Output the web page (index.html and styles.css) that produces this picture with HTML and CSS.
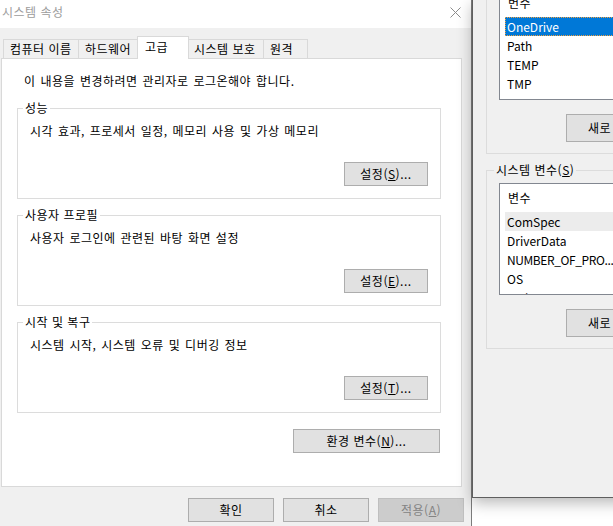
FILE: index.html
```html
<!DOCTYPE html>
<html lang="ko">
<head>
<meta charset="utf-8">
<title>시스템 속성</title>
<link rel="stylesheet" href="styles.css">
</head>
<body>
<div class="win-sys">
  <div class="titlebar">
    <span class="title">시스템 속성</span>
    <svg class="close" width="11" height="11" viewBox="0 0 11 11"><path d="M0.5 0.5L10.5 10.5M10.5 0.5L0.5 10.5" stroke="#8c8c8c" stroke-width="1" fill="none"/></svg>
  </div>
  <div class="sys-body">
    <div class="tabs">
      <div class="tab t1">컴퓨터 이름</div>
      <div class="tab t2">하드웨어</div>
      <div class="tab sel">고급</div>
      <div class="tab t4">시스템 보호</div>
      <div class="tab t5">원격</div>
    </div>
    <div class="panel">
      <p class="note">이 내용을 변경하려면 관리자로 로그온해야 합니다.</p>
      <fieldset class="group">
        <legend>성능</legend>
        <p class="desc">시각 효과, 프로세서 일정, 메모리 사용 및 가상 메모리</p>
        <div class="btn-row"><button class="btn">설정(<u>S</u>)...</button></div>
      </fieldset>
      <fieldset class="group">
        <legend>사용자 프로필</legend>
        <p class="desc">사용자 로그인에 관련된 바탕 화면 설정</p>
        <div class="btn-row"><button class="btn">설정(<u>E</u>)...</button></div>
      </fieldset>
      <fieldset class="group">
        <legend>시작 및 복구</legend>
        <p class="desc">시스템 시작, 시스템 오류 및 디버깅 정보</p>
        <div class="btn-row"><button class="btn">설정(<u>T</u>)...</button></div>
      </fieldset>
      <div class="env-row"><button class="btn btn-wide">환경 변수(<u>N</u>)...</button></div>
    </div>
    <div class="actions">
      <button class="btn btn-act">확인</button>
      <button class="btn btn-act">취소</button>
      <button class="btn btn-act" disabled>적용(<u>A</u>)</button>
    </div>
  </div>
</div>

<div class="win-env">
  <fieldset class="egroup first">
    <legend>사용자 변수(U)</legend>
    <div class="list">
      <div class="lhead">변수</div>
      <div class="lrow selected">OneDrive</div>
      <div class="lrow">Path</div>
      <div class="lrow">TEMP</div>
      <div class="lrow">TMP</div>
    </div>
    <button class="btn btn-new">새로 만들기(<u>N</u>)...</button>
  </fieldset>
  <fieldset class="egroup">
    <legend>시스템 변수(<u>S</u>)</legend>
    <div class="list">
      <div class="lhead">변수</div>
      <div class="lrow hover">ComSpec</div>
      <div class="lrow">DriverData</div>
      <div class="lrow narrow">NUMBER_OF_PRO...</div>
      <div class="lrow">OS</div>
      <div class="lrow">Path</div>
    </div>
    <button class="btn btn-new">새로 만들기(<u>W</u>)...</button>
  </fieldset>
</div>
</body>
</html>
```

FILE: styles.css
```css
* { box-sizing: border-box; }
html, body { margin: 0; padding: 0; }
body {
  width: 613px;
  height: 526px;
  overflow: hidden;
  position: relative;
  background: #ffffff;
  font-family: "Noto Sans CJK KR", "Noto Sans", sans-serif;
  font-size: 12px;
  letter-spacing: 0.5px;
  color: #000;
}
u { text-decoration: underline; text-underline-offset: 1px; }

/* ---------- System properties window ---------- */
.win-sys {
  position: absolute;
  left: 0;
  top: 0;
  width: 472px;
  height: 540px;
  background: #f0f0f0;
  border-right: 1px solid #7c7c7c;
}
.titlebar {
  height: 28px;
  background: #fff;
  display: flex;
  align-items: flex-start;
  justify-content: space-between;
  padding: 4px 10px 0 2px;
}
.title { color: #9c9c9c; line-height: 16px; }
.close { margin-top: 3px; display: block; }

.sys-body { padding: 8px 7px 0 1px; }

.tabs {
  display: flex;
  align-items: flex-end;
  height: 22px;
  padding-left: 2px;
}
.tab {
  height: 19px;
  line-height: 18px;
  border: 1px solid #d9d9d9;
  border-bottom: none;
  border-right: none;
  padding-left: 6px;
  background: #f0f0f0;
  white-space: nowrap;
}
.t1 { width: 75px; }
.t2 { width: 61px; }
.t4 { width: 76px; }
.t5 { width: 45px; border-right: 1px solid #d9d9d9; }
.sel {
  width: 52px;
  height: 23px;
  line-height: 20px;
  margin: 0 -2px -1px;
  padding-left: 7px;
  background: #fff;
  border-right: 1px solid #d9d9d9;
  position: relative;
  z-index: 1;
}

.panel {
  width: 461px;
  height: 429px;
  background: #fff;
  border: 1px solid #d9d9d9;
  padding: 14px 20px 0 15px;
}
.note { margin: 0 0 0 7px; line-height: 16px; word-spacing: 1px; }

.group {
  margin: 8px 0 0;
  border: 1px solid #dcdcdc;
  padding: 7px 12px 12px 12px;
  min-width: 0;
}
.note + .group { margin-top: 11px; }
.group legend {
  padding: 0 2px;
  margin-left: -7px;
  line-height: 16px;
}
.desc { margin: 0; line-height: 16px; word-spacing: 1px; }
.btn-row { display: flex; justify-content: flex-end; margin-top: 23px; }

.btn {
  height: 24px;
  width: 84px;
  padding: 0;
  background: #e1e1e1;
  border: 1px solid #adadad;
  font: inherit;
  letter-spacing: inherit;
  color: #000;
  line-height: 20px;
}
.btn:disabled { background: #cccccc; border-color: #bfbfbf; color: #838383; }
.btn-wide { width: 147px; }
.env-row { display: flex; justify-content: flex-end; margin-top: 16px; padding-right: 1px; }

.actions {
  display: flex;
  justify-content: flex-end;
  gap: 9px;
  margin-top: 11px;
}
.btn-act { width: 86px; }

/* ---------- Environment variables window ---------- */
.win-env {
  position: absolute;
  left: 472px;
  top: 0;
  width: 320px;
  height: 498px;
  background: #f0f0f0;
  border-left: 1px solid #5f5f5f;
  border-bottom: 1px solid #5f5f5f;
  box-shadow: 0 5px 14px rgba(0, 0, 0, 0.28);
  padding-left: 13px;
}
.egroup {
  width: 300px;
  margin: 8px 0 0;
  border: 1px solid #dcdcdc;
  padding: 5px 0 11px 12px;
  min-width: 0;
}
.egroup.first { margin-top: -33px; }
.egroup legend {
  padding: 0 2px;
  margin-left: -5px;
  line-height: 16px;
}
.list {
  width: 220px;
  height: 112px;
  border: 1px solid #828790;
  background: #fff;
  padding-left: 5px;
  overflow: hidden;
}
.lhead { height: 28px; line-height: 28px; padding-left: 3px; }
.lrow {
  height: 19px;
  line-height: 19px;
  padding-left: 2px;
  white-space: nowrap;
  letter-spacing: 0;
}
.lrow.narrow { letter-spacing: -0.4px; }
.lrow.selected {
  background: #0078d7;
  color: #fff;
  outline: 1px dotted #f0a040;
  outline-offset: -1px;
}
.lrow.hover { background: #ececec; }
.btn-new {
  display: block;
  width: 150px;
  height: 28px;
  margin: 14px 0 0 67px;
  text-align: left;
  padding-left: 21px;
}
```
